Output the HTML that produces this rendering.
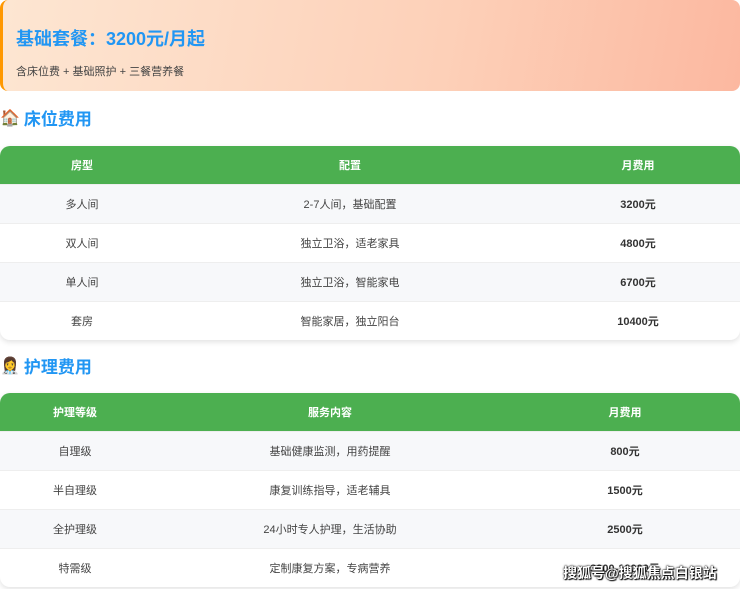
<!DOCTYPE html>
<html><head><meta charset="utf-8"><style>
*{margin:0;padding:0;box-sizing:border-box}
body{width:740px;height:589px;overflow:hidden;background:#fff;font-family:"Liberation Sans","Noto Sans CJK SC",sans-serif;position:relative}
.banner{position:absolute;left:0;top:0;width:740px;height:91px;background:linear-gradient(100deg,#fde6d2 0%,#fdd0b8 60%,#fcb8a0 100%);border-left:3px solid #ff9800;border-radius:8px}
.banner h1{position:absolute;left:13px;top:25px;font-size:18px;color:#2196f3;font-weight:bold}
.banner p{position:absolute;left:13px;top:63px;font-size:11px;color:#444}
.sec{position:absolute;left:0;font-size:17px;font-weight:bold;color:#2196f3;display:flex;align-items:center}
.sec span{font-size:16px;margin-right:4px}
table{position:absolute;left:0;width:740px;border-collapse:collapse;font-size:11px;color:#444;overflow:hidden;box-shadow:0 2px 6px rgba(0,0,0,.12)}
th{background:#4caf50;color:#fff;height:38px;font-weight:bold;font-size:11px}
td{height:39px;text-align:center;border-top:1px solid #eee}
tr:nth-child(even) td{background:#f7f8fa}
td.b{font-weight:bold;color:#333}
.t1{top:146px;border-radius:10px}
.t2{top:393px;border-radius:10px}
.wm{position:absolute;left:563px;top:563px;font-size:14px;color:#fff;font-weight:bold;text-shadow:0 0 2px #000,0 0 1px #000,1px 1px 1px #000}
</style></head><body>
<div class="banner"><h1>基础套餐：3200元/月起</h1><p>含床位费 + 基础照护 + 三餐营养餐</p></div>
<div class="sec" style="top:105px"><span>🏠</span>床位费用</div>
<table class="t1"><colgroup><col style="width:164px"><col style="width:372px"><col></colgroup>
<tr><th>房型</th><th>配置</th><th>月费用</th></tr>
<tr><td>多人间</td><td>2-7人间，基础配置</td><td class="b">3200元</td></tr>
<tr><td>双人间</td><td>独立卫浴，适老家具</td><td class="b">4800元</td></tr>
<tr><td>单人间</td><td>独立卫浴，智能家电</td><td class="b">6700元</td></tr>
<tr><td>套房</td><td>智能家居，独立阳台</td><td class="b">10400元</td></tr>
</table>
<div class="sec" style="top:353px"><span>👩‍⚕️</span>护理费用</div>
<table class="t2"><colgroup><col style="width:150px"><col style="width:360px"><col></colgroup>
<tr><th>护理等级</th><th>服务内容</th><th>月费用</th></tr>
<tr><td>自理级</td><td>基础健康监测，用药提醒</td><td class="b">800元</td></tr>
<tr><td>半自理级</td><td>康复训练指导，适老辅具</td><td class="b">1500元</td></tr>
<tr><td>全护理级</td><td>24小时专人护理，生活协助</td><td class="b">2500元</td></tr>
<tr><td>特需级</td><td>定制康复方案，专病营养</td><td class="b">3000-10000元</td></tr>
</table>
<div class="wm">搜狐号@搜狐焦点白银站</div>
</body></html>
